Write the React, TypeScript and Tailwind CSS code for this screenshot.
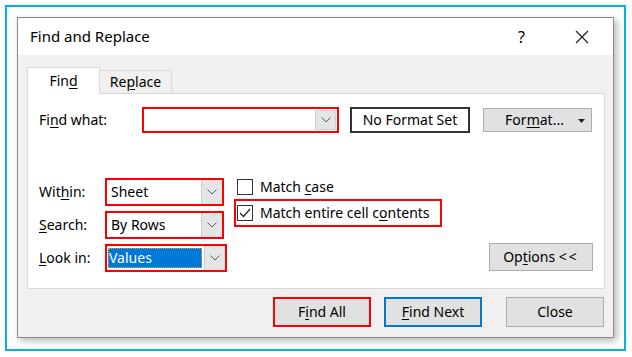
import React from "react";

const Chevron = () => (
  <svg width="10" height="6" viewBox="0 0 10 6" fill="none">
    <path d="M0.5 0.5 L5 5 L9.5 0.5" stroke="#5a5a5a" strokeWidth="1" />
  </svg>
);

const Select = ({ value, width, selected }: { value: string; width: string; selected?: boolean }) => (
  <div className={`${width} h-[28px] border-2 border-[#ff0000] bg-white flex items-stretch`}>
    <div className="flex-1 flex items-center pl-[1px] pr-[2px] py-[2px]">
      {selected ? (
        <span className="h-full w-full flex items-center bg-[#0078d7] text-white pl-[1px] outline-1 outline-dotted outline-[#e0a040] -outline-offset-1">
          {value}
        </span>
      ) : (
        <span className="pl-[3px] text-black">{value}</span>
      )}
    </div>
    <div className="w-[21px] bg-[#e5e5e5] border-l border-[#cfcfcf] flex items-center justify-center">
      <Chevron />
    </div>
  </div>
);

const Checkbox = ({ checked }: { checked?: boolean }) => (
  <div className="w-[16px] h-[16px] border border-[#333] bg-white flex items-center justify-center shrink-0">
    {checked && (
      <svg width="12" height="10" viewBox="0 0 12 10" fill="none">
        <path d="M1 5 L4.5 8.5 L11 1" stroke="#222" strokeWidth="1.2" />
      </svg>
    )}
  </div>
);

export default function App() {
  return (
    <div className="w-[632px] h-[357px] bg-white pt-[5px] pl-[5px] pr-[6px] pb-[6px] font-['Noto_Sans',sans-serif] text-[14px] text-black leading-none">
      <div className="h-full border-2 border-[#00b0f0] pt-[10px] pl-[10px] pr-[10px] pb-[11px]">
        <div className="h-full flex flex-col border border-[#8a8a8a] bg-[#f0f0f0] shadow-[3px_3px_7px_rgba(0,0,0,0.28)]">
          {/* Title bar */}
          <div className="h-[37px] bg-white flex items-center pl-[12px] shrink-0">
            <span className="text-[15px]">Find and Replace</span>
            <span className="ml-auto text-[16px] mr-[50px]">?</span>
            <svg width="14" height="14" viewBox="0 0 14 14" className="mr-[24px]">
              <path d="M1 1 L13 13 M13 1 L1 13" stroke="#222" strokeWidth="1.2" />
            </svg>
          </div>

          {/* Tabs */}
          <div className="flex items-end mt-[12px] ml-[9px] h-[26px] relative z-10">
            <div className="w-[73px] h-[27px] -mb-px bg-white border-t border-l border-r border-[#d9d9d9] flex items-center justify-center">
              <span>
                Fin<u className="underline-offset-2">d</u>
              </span>
            </div>
            <div className="w-[72px] h-[23px] border-t border-r border-[#d9d9d9] flex items-center justify-center">
              <span>
                Re<u className="underline-offset-2">p</u>lace
              </span>
            </div>
          </div>

          {/* Panel */}
          <div className="ml-[9px] mr-[8px] h-[196px] bg-white border border-[#d9d9d9] pt-[13px] flex flex-col">
            {/* Row 1 */}
            <div className="flex items-center h-[26px] pl-[11px]">
              <span className="w-[103px]">
                Fi<u className="underline-offset-2">n</u>d what:
              </span>
              <div className="w-[197px] h-[26px] border-2 border-[#ff0000] bg-white flex justify-end p-[1px]">
                <div className="w-[21px] bg-[#e5e5e5] border border-[#cfcfcf] flex items-center justify-center">
                  <Chevron />
                </div>
              </div>
              <div className="ml-[11px] w-[120px] h-[26px] border-2 border-[#333] flex items-center justify-center">
                No Format Set
              </div>
              <div className="ml-[13px] w-[109px] h-[24px] bg-[#e1e1e1] border border-[#adadad] flex items-center justify-center relative">
                <span className="mr-[6px]">
                  For<u className="underline-offset-2">m</u>at...
                </span>
                <svg width="7" height="4" viewBox="0 0 7 4" className="absolute right-[6px] top-[10px]">
                  <path d="M0 0 H7 L3.5 4 Z" fill="#222" />
                </svg>
              </div>
            </div>

            {/* Lower section */}
            <div className="flex items-start mt-[45px] pl-[11px]">
              <div className="grid grid-cols-[66px_auto] gap-y-[5px] items-center">
                <span>
                  Wit<u className="underline-offset-2">h</u>in:
                </span>
                <Select value="Sheet" width="w-[119px]" />
                <span>
                  <u className="underline-offset-2">S</u>earch:
                </span>
                <Select value="By Rows" width="w-[119px]" />
                <span>
                  <u className="underline-offset-2">L</u>ook in:
                </span>
                <Select value="Values" width="w-[122px]" selected />
              </div>

              <div className="ml-[7px] flex flex-col">
                <div className="h-[21px] flex items-start pt-[1px] pl-[3px] gap-[7px]">
                  <Checkbox />
                  <span className="mt-[1px]">
                    Match <u className="underline-offset-2">c</u>ase
                  </span>
                </div>
                <div className="w-[208px] h-[28px] border-2 border-[#ff0000] flex items-center pl-[1px] gap-[7px]">
                  <Checkbox checked />
                  <span>
                    Match entire cell c<u className="underline-offset-2">o</u>ntents
                  </span>
                </div>
              </div>

              <div className="ml-auto mr-[11px] self-end mb-[1px] w-[104px] h-[28px] bg-[#e1e1e1] border border-[#adadad] flex items-center justify-center">
                <span>
                  Op<u className="underline-offset-2">t</u>ions <span className="tracking-[2px]">&lt;&lt;</span>
                </span>
              </div>
            </div>
          </div>

          {/* Bottom buttons */}
          <div className="flex justify-end mt-[8px] mr-[9px]">
            <div className="w-[98px] h-[30px] bg-[#e1e1e1] border-2 border-[#ff0000] flex items-center justify-center">
              <span>
                F<u className="underline-offset-2">i</u>nd All
              </span>
            </div>
            <div className="ml-[13px] w-[98px] h-[30px] bg-[#e1e1e1] border-2 border-[#0078d7] flex items-center justify-center">
              <span>
                <u className="underline-offset-2">F</u>ind Next
              </span>
            </div>
            <div className="ml-[24px] w-[98px] h-[30px] bg-[#e1e1e1] border border-[#adadad] flex items-center justify-center">
              <span>Close</span>
            </div>
          </div>
        </div>
      </div>
    </div>
  );
}
